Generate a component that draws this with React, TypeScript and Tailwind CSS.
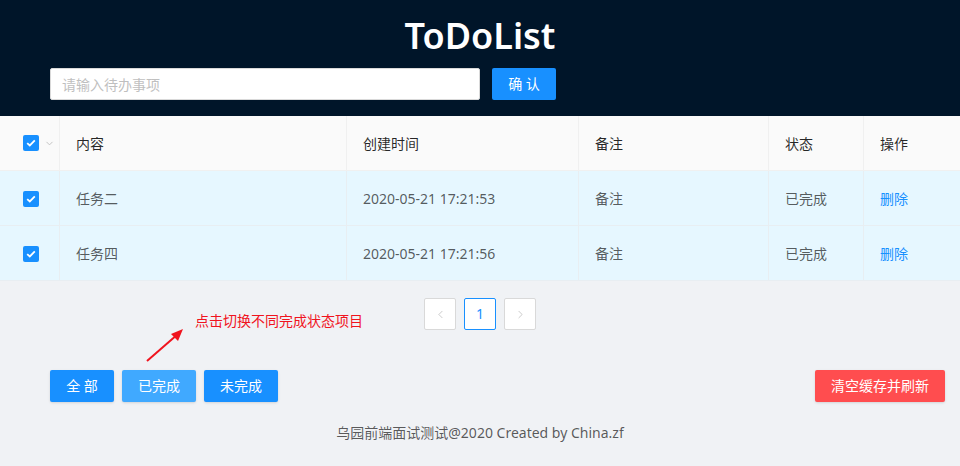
import React, { useState } from 'react';
import { ChevronDown, ChevronLeft, ChevronRight } from 'lucide-react';

type Todo = { id: number; content: string; time: string; note: string; done: boolean };

const todos: Todo[] = [
  { id: 2, content: '任务二', time: '2020-05-21 17:21:53', note: '备注', done: true },
  { id: 4, content: '任务四', time: '2020-05-21 17:21:56', note: '备注', done: true },
];

const Check: React.FC = () => (
  <span className="inline-flex w-4 h-4 rounded-[2px] bg-[#1890ff] items-center justify-center">
    <svg width="10" height="8" viewBox="0 0 10 8" fill="none">
      <path d="M1.2 4.1 L3.8 6.5 L8.8 1.4" stroke="white" strokeWidth="1.8" />
    </svg>
  </span>
);

const App: React.FC = () => {
  const [text, setText] = useState('');

  return (
    <div className="min-h-screen bg-[#f0f2f5] relative font-['Noto_Sans','Noto_Sans_CJK_SC',sans-serif] text-sm">
      <div className="h-[116px] bg-[#001529] px-[50px] pt-[14px]">
        <h1 className="text-center text-white text-[36px] font-semibold leading-[44px] h-[54px]">ToDoList</h1>
        <div className="flex items-center">
          <input
            value={text}
            onChange={e => setText(e.target.value)}
            placeholder="请输入待办事项"
            className="w-[430px] h-8 bg-white rounded-[2px] border border-[#d9d9d9] px-[11px] text-sm text-[rgba(0,0,0,0.65)] placeholder:text-[#bfbfbf] outline-none"
          />
          <button className="ml-3 w-16 h-8 rounded-[2px] bg-[#1890ff] text-white text-sm">确 认</button>
        </div>
      </div>

      <div className="grid grid-cols-[60px_287px_232px_190px_95px_96px] bg-white">
        <div className="h-[55px] bg-[#fafafa] border-b border-r border-[#f0f0f0] flex items-center pl-[23px]">
          <Check />
          <ChevronDown size={11} className="ml-[5px] text-[#bfbfbf]" />
        </div>
        {['内容', '创建时间', '备注', '状态', '操作'].map((h, i) => (
          <div
            key={h}
            className={`h-[55px] bg-[#fafafa] border-b border-[#f0f0f0] flex items-center px-4 pt-px text-[rgba(0,0,0,0.85)] ${i < 4 ? 'border-r' : ''}`}
          >
            {h}
          </div>
        ))}
        {todos.map(t => (
          <React.Fragment key={t.id}>
            <div className="h-[55px] bg-[#e6f7ff] border-b border-r border-[#e8eef2] flex items-center pl-[23px] pt-px">
              <Check />
            </div>
            <div className="h-[55px] bg-[#e6f7ff] border-b border-r border-[#e8eef2] flex items-center px-4 pt-px text-[rgba(0,0,0,0.65)]">{t.content}</div>
            <div className="h-[55px] bg-[#e6f7ff] border-b border-r border-[#e8eef2] flex items-center px-4 pt-px text-[rgba(0,0,0,0.65)]">{t.time}</div>
            <div className="h-[55px] bg-[#e6f7ff] border-b border-r border-[#e8eef2] flex items-center px-4 pt-px text-[rgba(0,0,0,0.65)]">{t.note}</div>
            <div className="h-[55px] bg-[#e6f7ff] border-b border-r border-[#e8eef2] flex items-center px-4 pt-px text-[rgba(0,0,0,0.65)]">{t.done ? '已完成' : '未完成'}</div>
            <div className="h-[55px] bg-[#e6f7ff] border-b border-[#e8eef2] flex items-center px-4 pt-px text-[#1890ff]">删除</div>
          </React.Fragment>
        ))}
      </div>

      <div className="mt-[17px] flex justify-center gap-2">
        <button className="w-8 h-8 bg-white border border-[#d9d9d9] rounded-[2px] flex items-center justify-center text-[rgba(0,0,0,0.25)]">
          <ChevronLeft size={13} strokeWidth={1.5} />
        </button>
        <button className="w-8 h-8 bg-white border border-[#1890ff] rounded-[2px] flex items-center justify-center text-[#1890ff]">1</button>
        <button className="w-8 h-8 bg-white border border-[#d9d9d9] rounded-[2px] flex items-center justify-center text-[rgba(0,0,0,0.25)]">
          <ChevronRight size={13} strokeWidth={1.5} />
        </button>
      </div>

      {/* annotation overlay */}
      <div className="absolute left-[195px] top-[310px] text-[#f0141e] text-sm leading-[22px]">点击切换不同完成状态项目</div>
      <svg className="absolute left-[140px] top-[322px]" width="50" height="44" viewBox="0 0 50 44">
        <line x1="7" y1="39" x2="38" y2="12" stroke="#f0141e" strokeWidth="2" />
        <path d="M43 7 L31 12 L38 19 Z" fill="#f0141e" />
      </svg>

      <div className="mt-10 flex items-center pl-[50px] pr-[15px]">
        <button className="w-16 h-8 rounded-[2px] bg-[#1890ff] text-white shadow-sm">全 部</button>
        <button className="ml-2 w-[74px] h-8 rounded-[2px] bg-[#40a9ff] text-white shadow-sm">已完成</button>
        <button className="ml-2 w-[74px] h-8 rounded-[2px] bg-[#1890ff] text-white shadow-sm">未完成</button>
        <button className="ml-auto w-[130px] h-8 rounded-[2px] bg-[#ff4d4f] text-white shadow-sm">清空缓存并刷新</button>
      </div>

      <div className="mt-5 text-center leading-[22px] text-[rgba(0,0,0,0.65)]">乌园前端面试测试@2020 Created by China.zf</div>
    </div>
  );
};

export default App;
